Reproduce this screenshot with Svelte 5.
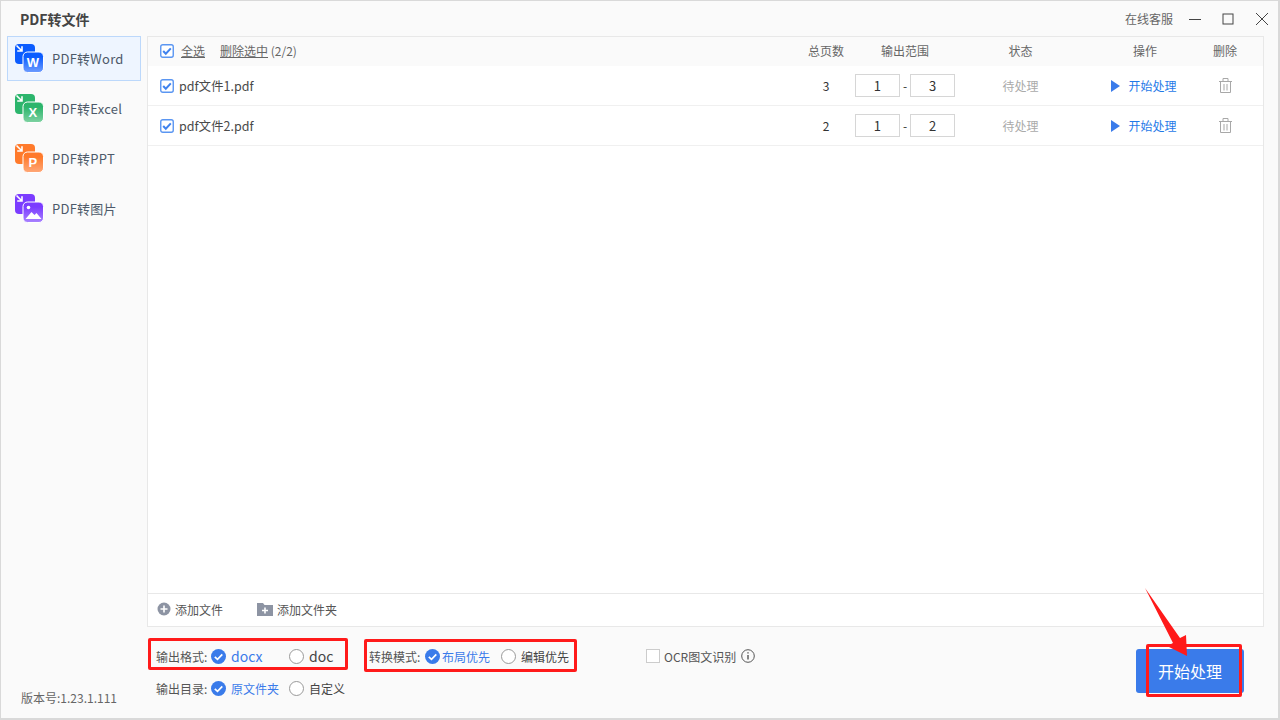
<script lang="ts">
	const tools = [
		{ name: 'PDF转Word', color: '#0b5cff', tint: '#6f9dff', mark: 'W' },
		{ name: 'PDF转Excel', color: '#2cb56c', tint: '#7fd2a2', mark: 'X' },
		{ name: 'PDF转PPT', color: '#ff7a2b', tint: '#ffa878', mark: 'P' },
		{ name: 'PDF转图片', color: '#7b3cff', tint: '#a983ff', mark: '' }
	];

	const files = [
		{ name: 'pdf文件1.pdf', pages: 3, from: 1, to: 3 },
		{ name: 'pdf文件2.pdf', pages: 2, from: 1, to: 2 }
	];
</script>

{#snippet check(x = 14)}
	<svg class="box" width={x} height={x} viewBox="0 0 14 14">
		<rect x="0.75" y="0.75" width="12.5" height="12.5" rx="2" fill="#fff" stroke="#5a96f2" stroke-width="1.4" />
		<path d="M3.2 7l2.6 2.7 5-5.3" fill="none" stroke="#3f82ee" stroke-width="2" />
	</svg>
{/snippet}

{#snippet radio(on = false)}
	<svg class="radio" width="15" height="15" viewBox="0 0 15 15">
		{#if on}
			<circle cx="7.5" cy="7.5" r="7.5" fill="#3a7bea" />
			<path d="M3.8 7.8l2.7 2.6 4.8-5" fill="none" stroke="#fff" stroke-width="1.7" />
		{:else}
			<circle cx="7.5" cy="7.5" r="7" fill="#fff" stroke="#999" />
		{/if}
	</svg>
{/snippet}

<div class="window">
	<header class="titlebar">
		<strong>PDF转文件</strong>
		<div class="controls">
			<span class="service">在线客服</span>
			<svg width="12" height="12" viewBox="0 0 12 12"><path d="M0 6.5h12" stroke="#444" /></svg>
			<svg width="12" height="12" viewBox="0 0 12 12"><rect x="1" y="1" width="10" height="10" fill="none" stroke="#444" /></svg>
			<svg width="14" height="14" viewBox="0 0 14 14"><path d="M1 1l12 12M13 1L1 13" stroke="#444" /></svg>
		</div>
	</header>

	<div class="content">
		<aside class="sidebar">
			<nav>
				{#each tools as tool, i}
					<div class="tool" class:active={i === 0}>
						<svg width="29" height="29" viewBox="0 0 29 29">
							<defs>
								<linearGradient id="front{i}" x1="0" y1="0" x2="0" y2="1">
									<stop offset="0.25" stop-color={tool.color} />
									<stop offset="1" stop-color={tool.tint} />
								</linearGradient>
							</defs>
							<rect x="0" y="0" width="20" height="20" rx="4" fill={tool.color} />
							<rect x="8" y="8" width="20.5" height="20.5" rx="4.5" fill="url(#front{i})" stroke="#fff" />
							<path d="M1.5 1.5l5 5M7 2.2V7H2.2" fill="none" stroke="#fff" stroke-width="1.6" />
							{#if tool.mark}
								<text x="18" y="23" text-anchor="middle" class="mark">{tool.mark}</text>
							{:else}
								<circle cx="13.5" cy="13.5" r="1.8" fill="#fff" />
								<path d="M10.5 25l6-7 3 3 2-2 5 6z" fill="#fff" />
							{/if}
						</svg>
						<span>{tool.name}</span>
					</div>
				{/each}
			</nav>
			<p class="version">版本号:1.23.1.111</p>
		</aside>

		<main class="main">
			<section class="panel">
				<div class="row head">
					<div class="select">
						{@render check()}
						<u class="all">全选</u>
						<span class="remove"><u>删除选中</u> (2/2)</span>
					</div>
					<span>总页数</span>
					<span>输出范围</span>
					<span>状态</span>
					<span>操作</span>
					<span>删除</span>
				</div>

				{#each files as file}
					<div class="row file">
						<div class="select">
							{@render check()}
							<span class="filename">{file.name}</span>
						</div>
						<span class="pages">{file.pages}</span>
						<div class="range">
							<span class="num">{file.from}</span>
							<span>-</span>
							<span class="num">{file.to}</span>
						</div>
						<span class="state">待处理</span>
						<span class="start">
							<svg width="9" height="12" viewBox="0 0 9 12"><path d="M0 0l9 6-9 6z" fill="#3a7bea" /></svg>
							开始处理
						</span>
						<svg class="trash" width="13" height="15" viewBox="0 0 13 15" fill="none" stroke="#a8a8a8">
							<path d="M0 3.5h13M4 3.5V.5h5v3M1.5 3.5v11h10v-11M5 6v6.5M8 6v6.5" />
						</svg>
					</div>
				{/each}

				<div class="adds">
					<span class="add">
						<svg width="14" height="14" viewBox="0 0 14 14">
							<circle cx="7" cy="7" r="6.5" fill="#8d94a3" />
							<path d="M7 3.5v7M3.5 7h7" stroke="#fff" stroke-width="1.6" />
						</svg>
						添加文件
					</span>
					<span class="add">
						<svg width="16" height="14" viewBox="0 0 16 14">
							<path d="M0 1h6l1.5 2H16v11H0z" fill="#8d94a3" />
							<path d="M8 5.5v6M5 8.5h6" stroke="#fff" stroke-width="1.6" />
						</svg>
						添加文件夹
					</span>
				</div>
			</section>

			<section class="bottom">
				<div class="options">
					<div class="line">
						<span class="label">输出格式:</span>
						<label class="opt w78 big on">{@render radio(true)}docx</label>
						<label class="opt w80 big">{@render radio()}doc</label>
						<span class="label mode">转换模式:</span>
						<label class="opt w76 on tight">{@render radio(true)}布局优先</label>
						<label class="opt w145">{@render radio()}编辑优先</label>
						<label class="ocr">
							<span class="plain"></span>
							OCR图文识别
							<svg width="14" height="14" viewBox="0 0 14 14" fill="none" stroke="#555">
								<circle cx="7" cy="7" r="6.3" />
								<path d="M7 6v4.6M7 3.2v1.4" stroke-width="1.4" />
							</svg>
						</label>
					</div>
					<div class="line">
						<span class="label">输出目录:</span>
						<label class="opt w78 on">{@render radio(true)}原文件夹</label>
						<label class="opt">{@render radio()}自定义</label>
					</div>
				</div>
				<button class="go">开始处理</button>
			</section>
		</main>
	</div>

	<!-- red annotations drawn on top of the screenshot -->
	<div class="mark-box one"></div>
	<div class="mark-box two"></div>
	<div class="mark-box three"></div>
	<svg class="arrow" width="60" height="80" viewBox="0 0 60 80">
		<path d="M3 0L38 50l6-3 1 21-20-10 6-3z" fill="#ff1a1a" />
	</svg>
</div>

<style>
	:global(body) {
		margin: 0;
	}

	.window {
		position: relative;
		box-sizing: border-box;
		width: 1280px;
		height: 720px;
		display: flex;
		flex-direction: column;
		overflow: hidden;
		background: #fafafa;
		border: 1px solid #d9d9d9;
		border-width: 1px 2px 2px 1px;
		font-family: 'Noto Sans CJK SC', 'Noto Sans', sans-serif;
		font-size: 12px;
		color: #555;
	}

	.titlebar {
		flex: none;
		height: 35px;
		display: flex;
		align-items: center;
		justify-content: space-between;
		padding: 0 9px 0 19px;
	}

	.titlebar strong {
		font-size: 14px;
		font-weight: 700;
		color: #444;
	}

	.controls {
		display: flex;
		align-items: center;
		gap: 21px;
		color: #666;
	}

	.service {
		margin-right: -5px;
	}

	.content {
		flex: 1;
		min-height: 0;
		display: flex;
	}

	.sidebar {
		flex: none;
		width: 146px;
		display: flex;
		flex-direction: column;
		justify-content: space-between;
		box-sizing: border-box;
		padding-left: 6px;
	}

	nav {
		display: flex;
		flex-direction: column;
		gap: 5px;
	}

	.tool {
		box-sizing: border-box;
		width: 134px;
		height: 45px;
		display: flex;
		align-items: center;
		gap: 8px;
		padding-left: 7px;
		border: 1px solid transparent;
		font-size: 13px;
		letter-spacing: 0.25px;
		color: #4d5a6a;
	}

	.tool.active {
		background: #eef5ff;
		border-color: #bcd8fb;
	}

	.mark {
		font-family: 'Liberation Sans', sans-serif;
		font-size: 13px;
		font-weight: 700;
		fill: #fff;
	}

	.version {
		margin: 0 0 12px 14px;
		color: #666;
	}

	.main {
		flex: 1;
		min-width: 0;
		display: flex;
		flex-direction: column;
		padding-right: 14px;
	}

	.panel {
		box-sizing: border-box;
		height: 591px;
		display: flex;
		flex-direction: column;
		background: #fff;
		border: 1px solid #e8e8e8;
	}

	.row {
		flex: none;
		display: grid;
		grid-template-columns: 637px 58px 100px 131px 118px 42px;
		align-items: center;
		justify-items: center;
		padding-left: 12px;
	}

	.head {
		height: 29px;
		padding-bottom: 2px;
		box-sizing: border-box;
		background: #fafafa;
		color: #666;
	}

	.file {
		height: 40px;
		border-bottom: 1px solid #f0f0f0;
		box-sizing: border-box;
	}

	.select {
		justify-self: start;
		display: flex;
		align-items: center;
	}

	.box {
		flex: none;
		margin-right: 5px;
	}

	.all {
		margin: 0 15px 0 2px;
	}

	.remove {
		color: #666;
		word-spacing: 0;
	}

	.filename {
		font-size: 12.5px;
		color: #4a4a4a;
	}

	.pages {
		color: #333;
	}

	.range {
		display: flex;
		align-items: center;
		gap: 3px;
		color: #333;
	}

	.num {
		box-sizing: border-box;
		width: 45px;
		height: 23px;
		display: flex;
		align-items: center;
		justify-content: center;
		background: #fff;
		border: 1px solid #d6d6d6;
		font-size: 13px;
	}

	.state {
		color: #aaa;
	}

	.start {
		display: flex;
		align-items: center;
		gap: 8px;
		margin-left: -2px;
		color: #1f7ae8;
	}

	.adds {
		margin-top: auto;
		box-sizing: border-box;
		height: 33px;
		display: flex;
		align-items: center;
		gap: 34px;
		padding: 0 0 2px 9px;
		border-top: 1px solid #e8e8e8;
	}

	.add {
		display: flex;
		align-items: center;
		gap: 4px;
		color: #555;
	}

	.bottom {
		flex: 1;
		display: flex;
		justify-content: space-between;
		align-items: flex-start;
		padding: 21px 20px 0 9px;
	}

	.options {
		display: flex;
		flex-direction: column;
		gap: 16px;
	}

	.line {
		height: 16px;
		display: flex;
		align-items: center;
	}

	.label {
		width: 55px;
	}

	.mode {
		width: 56px;
	}

	.opt {
		display: flex;
		align-items: center;
		gap: 5px;
		color: #444;
	}

	.opt.on {
		color: #3a7bea;
	}

	.tight {
		gap: 2px;
	}

	.big {
		font-size: 14px;
	}

	.w76 {
		width: 76px;
	}

	.w78 {
		width: 78px;
	}

	.w80 {
		width: 80px;
	}

	.w145 {
		width: 145px;
	}

	.ocr {
		display: flex;
		align-items: center;
		gap: 5px;
		color: #555;
	}

	.plain {
		box-sizing: border-box;
		width: 14px;
		height: 14px;
		background: #fff;
		border: 1px solid #ccc;
		margin-right: -1px;
	}

	.go {
		width: 108px;
		height: 44px;
		margin-top: 1px;
		background: #3a7bea;
		border: 0;
		border-radius: 3px;
		color: #fff;
		font: inherit;
		font-size: 16px;
	}

	.mark-box {
		position: absolute;
		box-sizing: border-box;
		border: 3px solid #ff1a1a;
		border-radius: 2px;
	}

	.one {
		left: 147px;
		top: 637px;
		width: 200px;
		height: 32px;
	}

	.two {
		left: 363px;
		top: 638px;
		width: 213px;
		height: 33px;
	}

	.three {
		left: 1145px;
		top: 643px;
		width: 96px;
		height: 53px;
	}

	.arrow {
		position: absolute;
		left: 1141px;
		top: 587px;
	}
</style>
